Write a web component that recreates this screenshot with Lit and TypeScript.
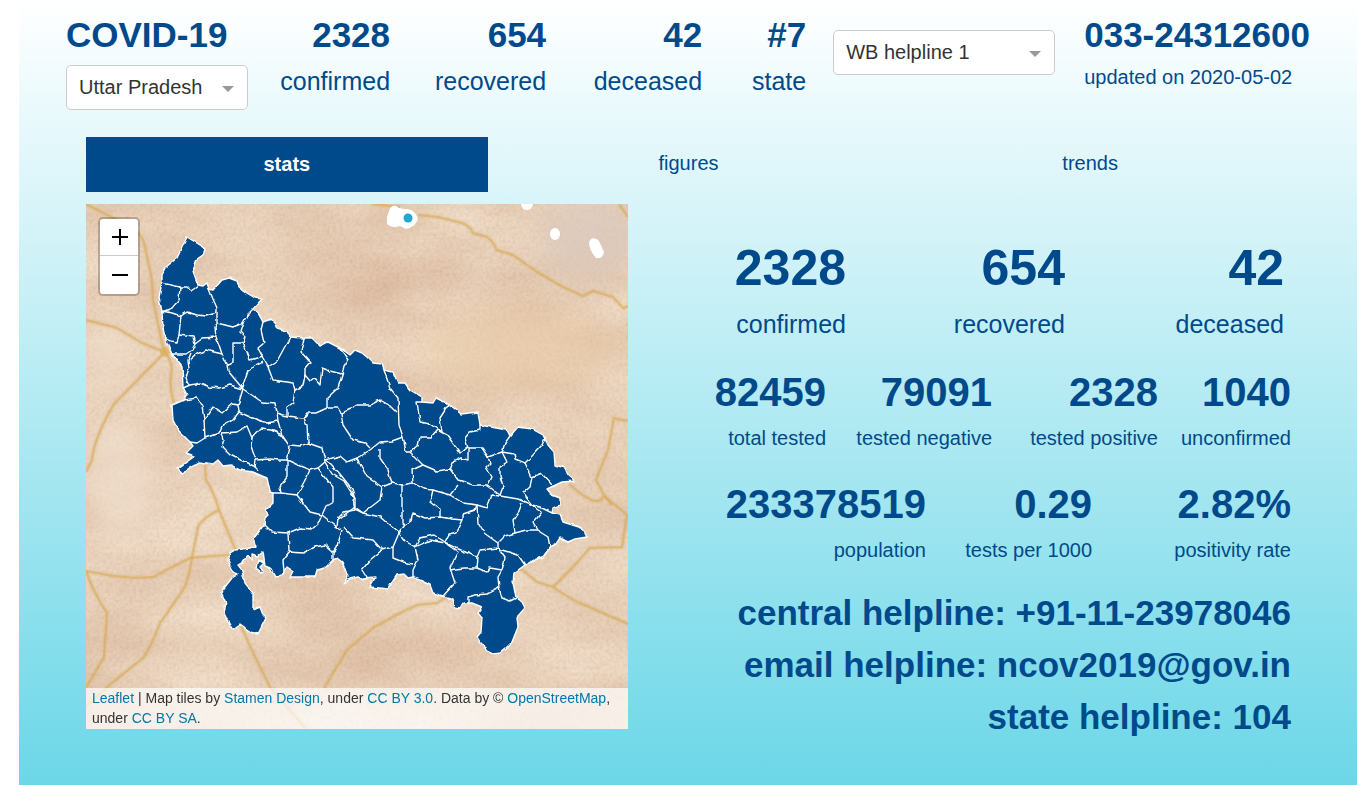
import { LitElement, html, svg, css } from "lit";
import { customElement, state } from "lit/decorators.js";

interface Figure {
  value: string;
  label: string;
}

const headline: Figure[] = [
  { value: "2328", label: "confirmed" },
  { value: "654", label: "recovered" },
  { value: "42", label: "deceased" },
];
const rank: Figure = { value: "#7", label: "state" };
const testing: Figure[] = [
  { value: "82459", label: "total tested" },
  { value: "79091", label: "tested negative" },
  { value: "2328", label: "tested positive" },
  { value: "1040", label: "unconfirmed" },
];
const ratios: Figure[] = [
  { value: "233378519", label: "population" },
  { value: "0.29", label: "tests per 1000" },
  { value: "2.82%", label: "positivity rate" },
];

const outline =
  "187,237 205,248 203,255 197,259 193,271 198,285 203,286 207,283 209,289 213,290 222,280 229,278 237,281 239,287 247,293 255,298 262,299 253,309 258,313 263,322 271,319 275,323 277,328 287,331 290,337 304,338 312,338 320,346 328,342 340,348 350,355 355,350 362,353 368,358 373,363 382,364 384,370 393,372 398,383 405,383 410,390 422,397 422,402 433,403 436,398 449,404 461,414 478,412 480,425 507,430 510,436 518,427 532,429 543,435 548,445 554,452 555,465 565,468 568,475 575,481 562,482 547,489 552,495 560,498 560,505 553,508 552,513 560,515 563,522 582,528 587,537 575,539 568,542 560,538 556,544 550,547 543,557 534,560 525,565 514,573 513,583 516,597 522,602 525,608 517,617 518,627 512,642 506,648 500,653 492,654 480,642 477,637 481,632 482,618 478,613 482,607 472,603 463,603 460,608 455,607 453,599 443,596 433,593 430,585 413,577 408,578 404,574 397,575 388,589 370,587 375,578 363,579 358,577 350,579 343,583 348,577 345,569 342,562 337,558 333,560 325,568 317,570 315,577 290,577 293,571 287,567 282,576 275,577 270,568 265,566 263,552 258,556 252,554 252,560 247,556 243,562 238,565 242,570 245,583 253,593 253,610 260,607 263,615 266,618 258,634 250,632 240,625 233,630 228,622 224,613 226,603 221,592 232,578 238,574 233,572 230,565 228,560 230,553 235,550 257,547 254,538 264,525 265,518 268,515 266,510 273,503 273,493 270,492 267,478 262,476 253,472 240,470 231,465 223,466 218,460 213,464 200,462 181,473 178,468 195,456 186,453 193,446 190,442 178,430 173,420 172,405 184,400 187,395 183,387 182,367 172,354 165,338 163,328 162,312 159,297 162,283 162,275 166,267 177,258";

const borders: string[] = [
  "162,283 180,287 187,287 191,291 198,286",
  "180,287 179,300 172,308 162,312",
  "162,311 172,313 181,316 187,312 197,315 205,316 217,313",
  "209,289 213,299 217,308 217,323",
  "181,316 179,335 177,342 170,341 165,338",
  "179,335 193,337 195,344 203,338 216,337 215,327 217,323",
  "217,323 233,327 243,323 247,315 253,309",
  "195,344 192,350 186,354 172,354",
  "191,353 188,360 189,368 186,378 189,385",
  "190,360 197,354 206,350 222,354 219,345 216,337",
  "222,354 227,365 228,371 243,389",
  "243,323 240,332 245,337 243,343 233,343 233,363 227,365",
  "243,343 247,352 250,360 263,356",
  "263,322 261,330 264,343 258,348 263,358 268,367",
  "263,362 248,370 242,388",
  "268,367 277,361 282,352 290,337",
  "268,367 273,380 293,383 295,390 293,403 287,407 287,416",
  "295,390 303,386 305,375 310,381 314,378 320,385 322,368 330,371 342,374 344,366 348,360 340,348",
  "304,338 301,352 310,362 305,368 305,375",
  "343,372 338,388 327,398 327,408 338,408 341,413 350,409 357,405 370,405 380,400 389,405 397,413",
  "287,416 303,418 307,413 316,413 327,408",
  "341,413 343,425 353,440 365,443 370,448",
  "384,370 390,388 398,398 399,425 403,437 406,452",
  "370,450 380,442 392,441 403,437",
  "370,450 357,458 347,462 340,456 325,460",
  "243,389 230,385 220,388 210,387 200,383 190,385 183,388",
  "243,389 238,405 232,404 222,413 213,407 209,413 204,420 202,406 197,398 184,400",
  "204,420 205,438 197,443 190,442",
  "243,389 262,402 275,403 277,413 287,416",
  "238,405 239,412 233,420 222,426 219,433 205,438",
  "239,412 250,417 267,423 278,421 277,413",
  "278,421 282,435 271,430 260,429 252,438 247,426 237,432 222,433",
  "222,433 224,440 222,447 230,455 247,463 256,467",
  "252,438 251,446 253,452 256,460 255,467 258,470",
  "256,460 270,459 278,460 287,460",
  "282,435 290,447 287,460 287,477 280,487 281,493 273,493",
  "290,445 300,446 308,443 307,425 304,418 308,414",
  "308,443 322,448 325,462 318,468 310,470 300,466 287,460",
  "310,470 304,482 297,495 281,493",
  "325,462 332,474 344,481 355,498",
  "318,468 325,477 333,487 333,502 326,506 322,515 310,512 297,495",
  "264,524 272,532 288,533 300,528 312,529 318,524 322,515",
  "288,533 289,552 283,560 284,572",
  "289,552 303,553 315,547 325,545 333,552 333,560",
  "322,515 337,527 342,530 337,547 333,552",
  "337,527 338,518 344,512 355,510 353,500 355,498",
  "355,509 363,513 380,517 399,533 393,547 382,550 373,540 353,538 343,527",
  "382,550 370,560 362,570 367,578",
  "393,547 393,558 403,562 413,564",
  "325,460 330,463 340,474 352,489 355,498 355,507 340,518 338,519",
  "357,458 360,464 367,477 382,487 392,483 388,470 380,458 380,450",
  "382,487 380,500 363,513 355,507",
  "392,483 402,485 413,483 412,470 423,465 410,452 406,452",
  "402,485 402,522 405,525",
  "399,533 405,525 411,521 413,513 425,518 440,517 452,519 463,520 457,532 449,534 445,542 434,535 420,538 415,547 405,541 399,533",
  "413,483 424,489 433,490 430,502 440,510 440,517",
  "433,490 450,495 463,503 477,505 475,510 463,514 463,520",
  "423,465 437,471 450,469 458,480 465,482 473,485 487,485 500,495",
  "450,495 458,485",
  "450,470 453,462 461,458 468,460 468,448 465,438 470,432 480,430 480,425",
  "410,452 418,446 420,437 431,437 437,430 447,435 452,442 460,453 467,447",
  "422,402 417,402 420,422 430,424 437,429 442,432",
  "449,404 440,418 442,432",
  "468,448 482,448 488,457 502,452 505,443 510,436",
  "488,457 490,463 486,467 492,477 487,487",
  "502,452 507,462 500,467 500,477 503,487 500,495",
  "502,452 514,454 515,459 525,463 533,455 542,445 545,438",
  "525,463 532,477 530,487 523,493 532,505 518,499 500,496",
  "532,477 542,473 553,485",
  "500,496 492,495 487,508 477,505",
  "477,505 478,523 484,533 498,543",
  "522,503 519,511 513,520 515,533 505,536 498,543",
  "532,505 542,512 533,523 537,530 548,537 550,547",
  "515,533 526,530 537,530",
  "532,505 540,507 552,513",
  "415,547 418,560 413,570 413,577",
  "415,547 430,540 445,543 458,552 450,568 455,583 443,596",
  "445,543 463,551 477,557 480,550 498,548 498,543",
  "450,570 464,568 477,568 478,557",
  "477,568 487,572 490,568 502,570 505,558 498,548",
  "502,550 518,555 525,565",
  "502,570 498,577 499,588 502,598 510,601 516,598",
  "499,588 487,594 475,595 468,597 468,603",
];

const roads: string[] = [
  "M86 204L113 218L135 231Q144 236 146 252L152 280L153 300L162 343L165 352",
  "M86 320L117 328L142 343L165 352L114 404Q94 438 92 460L86 472",
  "M165 352Q174 363 171 375Q169 390 175 406",
  "M205 465L206 480Q214 492 219 510L238 556",
  "M219 510Q202 518 198 527L192 558Q188 582 183 590L160 623Q152 645 143 658L107 687L80 712",
  "M86 571L113 576Q138 579 153 577L190 558L238 554",
  "M86 571Q94 594 107 613L104 657L86 688",
  "M240 624L255 657L270 687L306 729",
  "M418 215L438 217L462 223Q470 226 473 233L487 237Q492 240 497 250L513 255L537 272L563 287L583 296L593 291L613 297L623 308L628 306",
  "M372 204L400 207M619 204L628 217",
  "M514 567L524 571L537 582L553 587L573 600L628 624",
  "M553 587L572 568L590 548L622 547L627 515Q624 512 604 496",
  "M447 597L437 603L417 605L400 613L373 628L347 650L324 688",
  "M569 484L580 493Q600 508 604 495L596 480L608 450L614 418L628 421M604 495L612 505",
];

@customElement("uttar-pradesh-map")
export class UttarPradeshMap extends LitElement {
  static styles = css`
    :host {
      display: block;
      position: relative;
      overflow: hidden;
    }
    .canvas {
      display: block;
      width: 100%;
    }
    .road {
      fill: none;
      stroke: #d3a954;
      stroke-width: 2.6;
      stroke-linejoin: round;
      opacity: 0.55;
    }
    .road-glow {
      fill: none;
      stroke: #dfb983;
      stroke-width: 6;
      opacity: 0.2;
    }
    .state {
      fill: #004a8b;
      stroke: #fff;
      stroke-width: 1.4;
      stroke-linejoin: round;
    }
    .border {
      fill: none;
      stroke: #fff;
      stroke-width: 1.4;
      stroke-linejoin: round;
    }
    .zoom {
      position: absolute;
      top: 13px;
      left: 12px;
      display: flex;
      flex-direction: column;
      border: 2px solid rgba(0, 0, 0, 0.22);
      border-radius: 5px;
      background-clip: padding-box;
    }
    .zoom button {
      box-sizing: border-box;
      width: 38px;
      height: 38px;
      padding: 0 0 0 1px;
      border: 0;
      background: #fff;
      border-radius: 0 0 3px 3px;
      display: grid;
      place-items: center;
      cursor: pointer;
    }
    .zoom button:first-child {
      height: 37px;
      border-bottom: 1px solid #ccc;
      border-radius: 3px 3px 0 0;
    }
    .credit {
      position: absolute;
      left: 0;
      right: 0;
      bottom: 0;
      padding: 0 6px 1px;
      background: rgba(255, 255, 255, 0.7);
      color: #333;
      font-size: 14px;
      line-height: 20px;
    }
    .credit a {
      color: #0078a8;
      text-decoration: none;
    }
  `;

  render() {
    return html`
      <svg class="canvas" viewBox="86 204 542 525" role="img" aria-label="Districts of Uttar Pradesh">
        <defs>
          <filter id="paper" x="0" y="0" width="1" height="1" color-interpolation-filters="sRGB">
            <feTurbulence type="fractalNoise" baseFrequency="0.007 0.016" numOctaves="5" seed="11" result="wash" />
            <feColorMatrix
              in="wash"
              values="0.1 0 0 0 0.865  0.17 0 0 0 0.735  0.2 0 0 0 0.63  0 0 0 0 1"
              result="tone"
            />
            <feTurbulence type="fractalNoise" baseFrequency="0.3" numOctaves="2" seed="4" />
            <feColorMatrix values="0 0 0 0 0.5  0 0 0 0 0.34  0 0 0 0 0.24  0.22 0 0 0 -0.08" result="grain" />
            <feMerge>
              <feMergeNode in="tone" />
              <feMergeNode in="grain" />
            </feMerge>
          </filter>
          <filter id="rough" x="-2%" y="-2%" width="104%" height="104%" color-interpolation-filters="sRGB">
            <feTurbulence type="fractalNoise" baseFrequency="0.15" numOctaves="1" seed="7" />
            <feDisplacementMap in="SourceGraphic" scale="4" xChannelSelector="R" yChannelSelector="G" />
          </filter>
          <filter id="soft" x="-50%" y="-50%" width="200%" height="200%"><feGaussianBlur stdDeviation="14" /></filter>
        </defs>
        <rect x="86" y="204" width="542" height="525" fill="#e9d2bd" filter="url(#paper)" />
        <g filter="url(#soft)">
          <ellipse cx="590" cy="240" rx="50" ry="42" fill="#d9c9bd" opacity="0.7" />
          <ellipse cx="400" cy="214" rx="34" ry="16" fill="#d2aa8c" opacity="0.45" />
          <ellipse cx="520" cy="350" rx="100" ry="44" fill="#eacaa4" opacity="0.5" />
          <ellipse cx="120" cy="480" rx="36" ry="60" fill="#f2e3d2" opacity="0.6" />
          <ellipse cx="110" cy="360" rx="24" ry="40" fill="#efe0ce" opacity="0.5" />
        </g>
        ${roads.map((d) => svg`<path class="road-glow" d=${d} /><path class="road" d=${d} />`)}
        <circle cx="165" cy="352" r="5" fill="#d9ae58" opacity="0.6" />
        <g fill="#fff">
          <path d="M387 217L390 208Q395 203 399 208L405 209Q413 208 418 218Q416 227 406 229L400 226Q392 229 387 224Z" />
          <circle cx="408" cy="218" r="4.5" fill="#1fa8d6" />
          <ellipse cx="527" cy="204" rx="6" ry="6" />
          <ellipse cx="555" cy="234" rx="5" ry="6" />
          <path d="M591 239Q595 237 599 241L604 252Q603 259 596 258Q589 250 589 242Z" />
        </g>
        <g filter="url(#rough)">
          <polygon class="state" points=${outline} />
          ${borders.map((p) => svg`<polyline class="border" points=${p} />`)}
          <polygon class="state" points="258,560 264,563 260,567 263,571 261,573 256,569 257,563" />
        </g>
      </svg>
      <div class="zoom">
        <button type="button" aria-label="Zoom in">
          <svg width="16" height="16" viewBox="0 0 16 16"><path d="M0 8H16M8 0V16" stroke="#000" stroke-width="2" /></svg>
        </button>
        <button type="button" aria-label="Zoom out">
          <svg width="16" height="16" viewBox="0 0 16 16"><path d="M0 8H16" stroke="#000" stroke-width="2" /></svg>
        </button>
      </div>
      <div class="credit">
        <a href="#leaflet">Leaflet</a> <span>| Map tiles by</span> <a href="#stamen">Stamen Design</a><span>, under</span>
        <a href="#ccby">CC BY 3.0</a><span>. Data by ©</span> <a href="#osm">OpenStreetMap</a><span>,</span>
        <span>under</span> <a href="#ccbysa">CC BY SA</a><span>.</span>
      </div>
    `;
  }
}

@customElement("app-root")
export class AppRoot extends LitElement {
  @state() private tab = "stats";

  static styles = css`
    :host {
      display: block;
      font-family: "Liberation Sans", Arial, sans-serif;
      font-size: 20px;
      line-height: 24px;
      color: #004a8b;
    }
    .page {
      box-sizing: border-box;
      min-height: 100vh;
      margin-left: 19px;
      padding: 15px 0 56px;
      background: linear-gradient(#fff, #69d6e7);
    }
    .top {
      display: grid;
      grid-template-columns: 182fr 142fr 156fr 156fr 104fr 249fr 254fr;
      padding: 0 47px;
    }
    h1,
    p {
      margin: 0;
    }
    .big {
      font-size: 35px;
      line-height: 40px;
      font-weight: bold;
      white-space: nowrap;
    }
    .select {
      display: block;
      position: relative;
      margin-top: 10px;
    }
    .select::after {
      content: "";
      position: absolute;
      right: 14px;
      top: 21px;
      border: 6px solid transparent;
      border-top-color: #999;
      border-bottom: 0;
      pointer-events: none;
    }
    .select select {
      appearance: none;
      box-sizing: border-box;
      width: 100%;
      height: 45px;
      padding: 0 32px 2px 12px;
      border: 1px solid #ccc;
      border-radius: 5px;
      background: #fff;
      color: #333;
      font: inherit;
    }
    .helpline {
      padding: 5px 0 0 27px;
    }
    .contact {
      padding-left: 29px;
    }
    .contact p + p {
      margin-top: 10px;
    }
    .figure {
      text-align: right;
      white-space: nowrap;
    }
    .top .label {
      margin-top: 12px;
      font-size: 25px;
      line-height: 28px;
    }
    .body {
      margin: 27px 66px 0 67px;
    }
    .tabs {
      display: grid;
      grid-template-columns: repeat(3, 1fr);
    }
    .tabs button {
      height: 55px;
      padding: 0 0 4px;
      border: 0;
      background: none;
      color: inherit;
      font: inherit;
      cursor: pointer;
    }
    .tabs button[aria-selected="true"] {
      padding-bottom: 2px;
      background: #004a8b;
      color: #fff;
      font-weight: bold;
    }
    .panel {
      display: grid;
      grid-template-columns: 542fr 663fr;
      margin-top: 12px;
      align-items: start;
    }
    .numbers {
      padding-top: 36px;
    }
    .row {
      display: grid;
    }
    .headline {
      grid-template-columns: 218fr 219fr 219fr;
      padding-right: 7px;
    }
    .testing {
      grid-template-columns: 198fr 166fr 166fr 133fr;
      margin-top: 31px;
    }
    .ratios {
      grid-template-columns: 298fr 166fr 199fr;
      margin-top: 31px;
    }
    .row .value {
      font-size: 40px;
      line-height: 46px;
      font-weight: bold;
    }
    .row .label {
      margin-top: 11px;
    }
    .headline .value {
      font-size: 50px;
      line-height: 56px;
    }
    .headline .label {
      margin-top: 14px;
      font-size: 25px;
      line-height: 28px;
    }
    .lines {
      margin-top: 25px;
      text-align: right;
      font-size: 35px;
      line-height: 52px;
      font-weight: bold;
      white-space: nowrap;
    }
  `;

  private figure(f: Figure, valueClass = "value") {
    return html`<div class="figure">
      <p class=${valueClass}>${f.value}</p>
      <p class="label">${f.label}</p>
    </div>`;
  }

  render() {
    return html`
      <div class="page">
        <header class="top">
          <div>
            <h1 class="big">COVID-19</h1>
            <label class="select">
              <select aria-label="State">
                <option>Uttar Pradesh</option>
                <option>West Bengal</option>
              </select>
            </label>
          </div>
          ${[...headline, rank].map((f) => this.figure(f, "big"))}
          <div class="helpline">
            <label class="select">
              <select aria-label="Helpline">
                <option>WB helpline 1</option>
                <option>WB helpline 2</option>
              </select>
            </label>
          </div>
          <div class="contact">
            <p class="big">033-24312600</p>
            <p>updated on 2020-05-02</p>
          </div>
        </header>
        <main class="body">
          <div class="tabs" role="tablist">
            ${["stats", "figures", "trends"].map(
              (name) => html`<button
                type="button"
                role="tab"
                aria-selected=${this.tab === name ? "true" : "false"}
                @click=${() => (this.tab = name)}
              >
                ${name}
              </button>`
            )}
          </div>
          <div class="panel">
            <uttar-pradesh-map></uttar-pradesh-map>
            <section class="numbers">
              <div class="row headline">${headline.map((f) => this.figure(f))}</div>
              <div class="row testing">${testing.map((f) => this.figure(f))}</div>
              <div class="row ratios">${ratios.map((f) => this.figure(f))}</div>
              <div class="lines">
                <p>central helpline: +91-11-23978046</p>
                <p>email helpline: ncov2019@gov.in</p>
                <p>state helpline: 104</p>
              </div>
            </section>
          </div>
        </main>
      </div>
    `;
  }
}
